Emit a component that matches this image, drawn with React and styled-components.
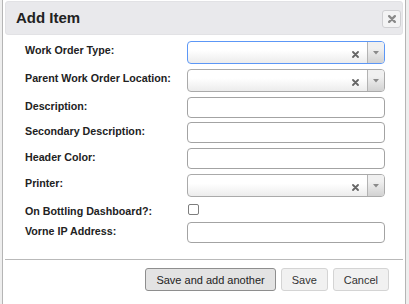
import React from "react";
import styled, { createGlobalStyle } from "styled-components";

const Global = createGlobalStyle`
  html, body { margin: 0; padding: 0; }
  body {
    background: #eeeeee;
    font-family: "Liberation Sans", Arial, sans-serif;
    overflow: hidden;
  }
`;

const Dialog = styled.div`
  box-sizing: border-box;
  width: 404px;
  margin: -2px 0 0 2px;
  border: 1px solid #b5b5b5;
  padding: 2px;
  background: #ffffff;
`;

const TitleBar = styled.div`
  box-sizing: border-box;
  height: 34px;
  display: flex;
  align-items: center;
  justify-content: space-between;
  padding: 0 1px 0 10px;
  background: #e9e9ec;
  border: 1px solid #e2e2e5;
  border-radius: 3px;
`;

const Title = styled.span`
  font-size: 15px;
  font-weight: bold;
  color: #222;
  line-height: 18px;
`;

const CloseButton = styled.button`
  box-sizing: border-box;
  width: 19px;
  height: 18px;
  margin-top: 1px;
  padding: 0;
  display: flex;
  align-items: center;
  justify-content: center;
  background: #f3f3f4;
  border: 1px solid #cfcfd2;
  border-radius: 3px;
`;

const Form = styled.div`
  display: grid;
  grid-template-columns: 162px 198px;
  grid-template-rows: 28px 28px 25px 26px 26px 28px 20px 21px;
  align-items: start;
  padding: 6px 0 16px 20px;
`;

const Label = styled.label`
  font-size: 10.7px;
  font-weight: bold;
  color: #222;
  line-height: 13px;
  padding-top: 3px;
`;

const TextInput = styled.input`
  box-sizing: border-box;
  width: 198px;
  height: 21px;
  margin: 0;
  border: 1px solid #a3a3a3;
  border-radius: 4px;
  background: #fff;
  outline: none;
`;

const SelectBox = styled.div`
  box-sizing: border-box;
  width: 198px;
  height: 23px;
  display: flex;
  align-items: stretch;
  border: 1px solid ${(p) => (p.$focused ? "#5c97f6" : "#aaaaaa")};
  border-radius: 4px;
  background: linear-gradient(to bottom, #ffffff 40%, #ececec 100%);
  overflow: hidden;
`;

const SelectValue = styled.div`
  flex: 1;
`;

const ClearIcon = styled.div`
  width: 7px;
  display: flex;
  align-items: center;
  padding-top: 4px;
  margin-right: 8px;
`;

const Arrow = styled.div`
  box-sizing: border-box;
  width: 17px;
  display: flex;
  align-items: center;
  justify-content: center;
  padding-top: 1px;
  border-left: 1px solid #b3b3b3;
  background: linear-gradient(to bottom, #f0f0f0 30%, #d2d2d2 100%);
`;

const CheckBox = styled.span`
  box-sizing: border-box;
  display: block;
  width: 11px;
  height: 11px;
  margin: 2px 0 0 1px;
  border: 1px solid #7d7d7d;
  border-radius: 2px;
  background: #fff;
`;

const ButtonPane = styled.div`
  display: flex;
  justify-content: flex-end;
  gap: 5px;
  padding: 8px 14px 12px 0;
  border-top: 1px solid #b9b9b9;
`;

const Button = styled.button`
  box-sizing: border-box;
  height: 23px;
  padding: 0 10px;
  font-family: "Liberation Sans", Arial, sans-serif;
  font-size: 11px;
  color: ${(p) => (p.$active ? "#222" : "#333")};
  background: ${(p) => (p.$active ? "#e3e3e3" : "#f1f1f1")};
  border: 1px solid ${(p) => (p.$active ? "#8e8e8e" : "#d4d4d4")};
  border-radius: 3px;
`;

const XMark = ({ size = 7, color = "#666", w = 1.8 }) => (
  <svg width={size} height={size} viewBox="0 0 7 7">
    <path d="M1 1 L6 6 M6 1 L1 6" stroke={color} strokeWidth={w} strokeLinecap="round" />
  </svg>
);

const Select = ({ focused }) => (
  <SelectBox $focused={focused}>
    <SelectValue />
    <ClearIcon>
      <XMark />
    </ClearIcon>
    <Arrow>
      <svg width="6" height="4" viewBox="0 0 6 4">
        <path d="M0 0 L6 0 L3 3.5 Z" fill="#8a8a8a" />
      </svg>
    </Arrow>
  </SelectBox>
);

export default function App() {
  return (
    <>
      <Global />
      <Dialog>
        <TitleBar>
          <Title>Add Item</Title>
          <CloseButton aria-label="close">
            <XMark size={8} color="#8a8a8a" w={2} />
          </CloseButton>
        </TitleBar>
        <Form>
          <Label>Work Order Type:</Label>
          <Select focused />
          <Label>Parent Work Order Location:</Label>
          <Select />
          <Label>Description:</Label>
          <TextInput />
          <Label>Secondary Description:</Label>
          <TextInput />
          <Label>Header Color:</Label>
          <TextInput />
          <Label>Printer:</Label>
          <Select />
          <Label>On Bottling Dashboard?:</Label>
          <CheckBox />
          <Label>Vorne IP Address:</Label>
          <TextInput />
        </Form>
        <ButtonPane>
          <Button $active>Save and add another</Button>
          <Button>Save</Button>
          <Button>Cancel</Button>
        </ButtonPane>
      </Dialog>
    </>
  );
}
